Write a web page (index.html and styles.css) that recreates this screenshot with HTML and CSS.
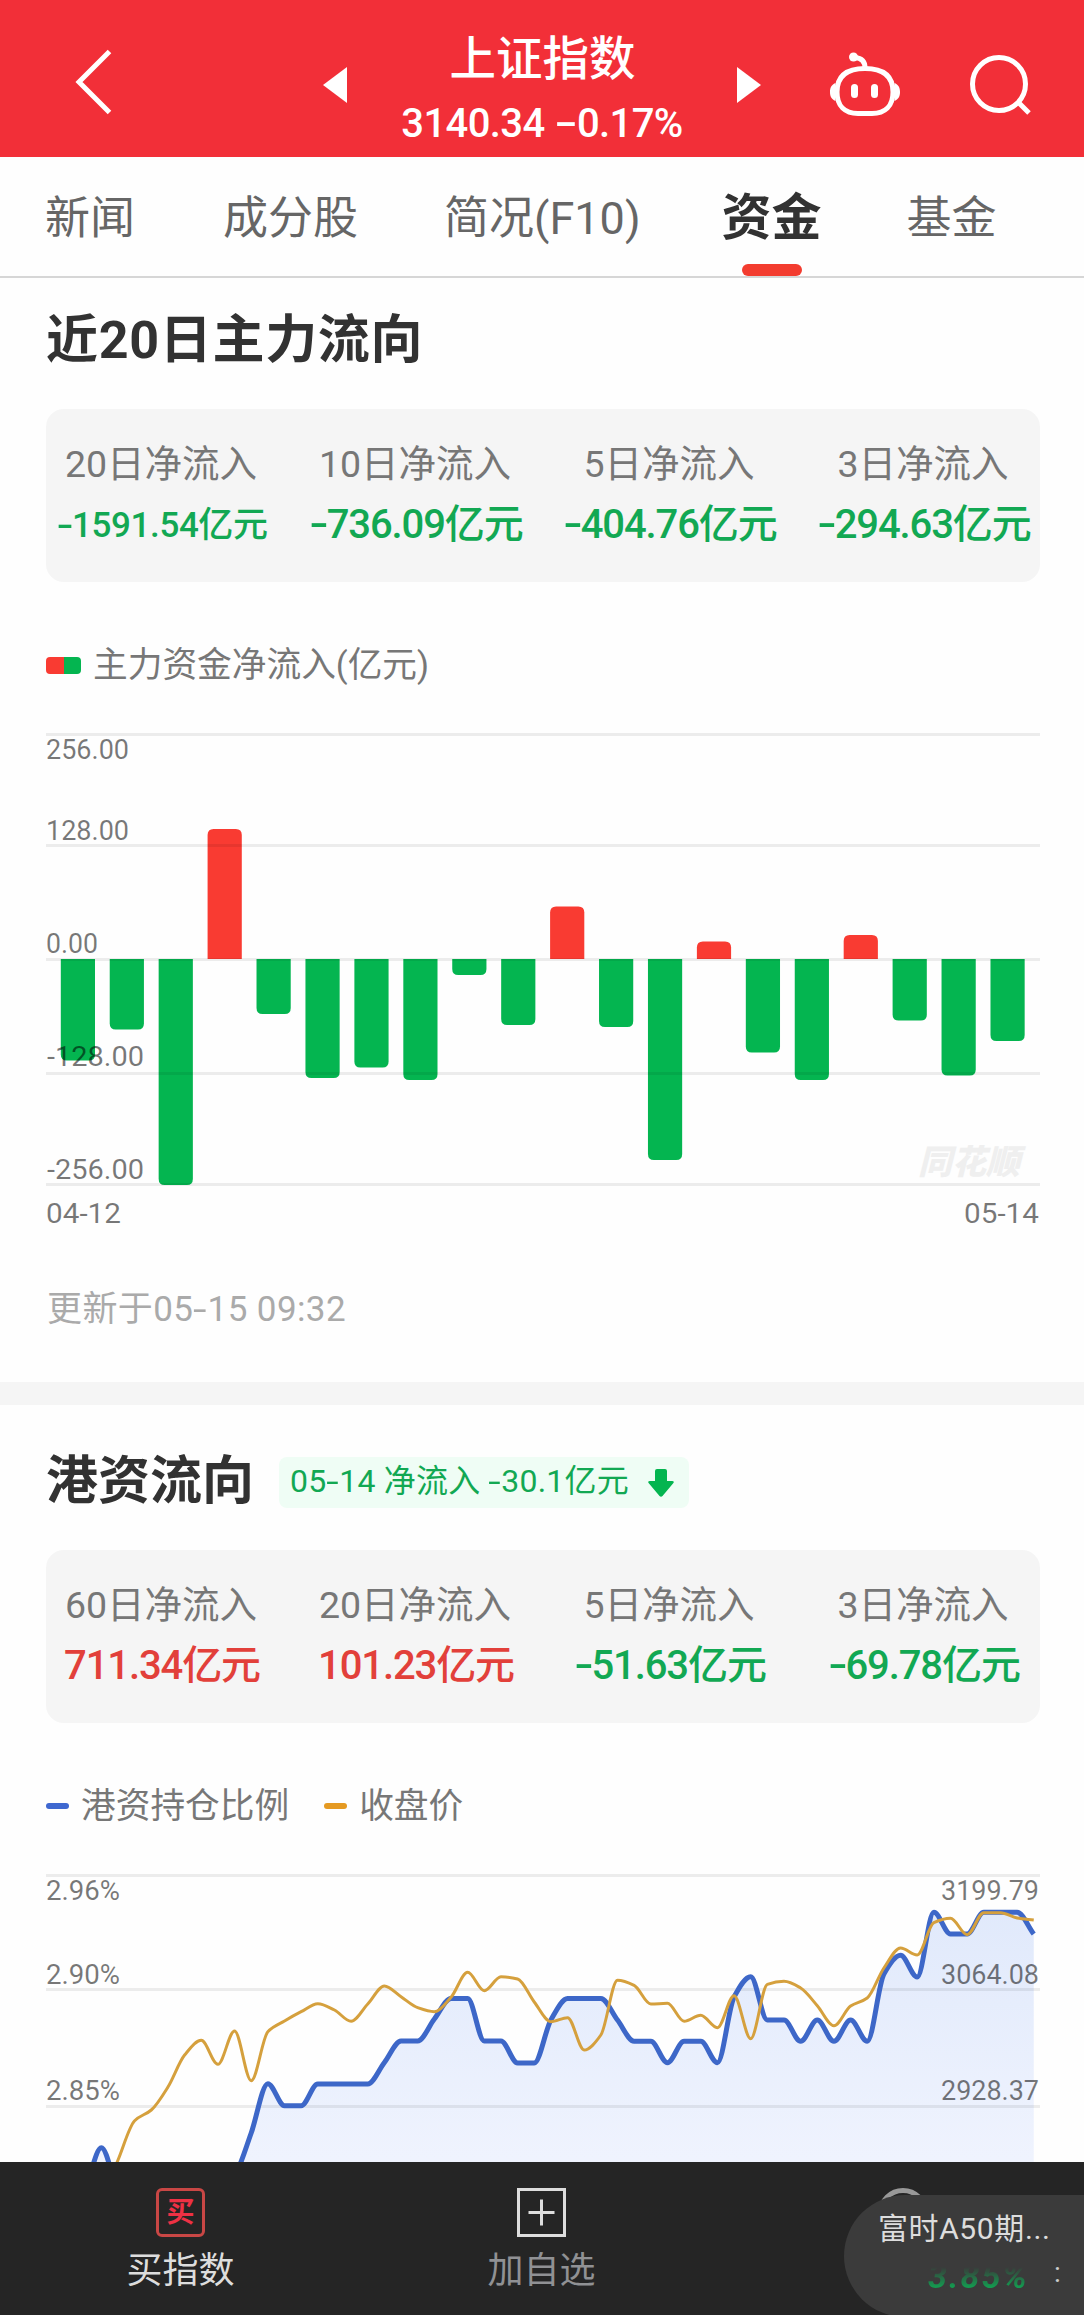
FILE: index.html
```html
<!DOCTYPE html>
<html lang="zh-CN">
<head>
  <meta charset="UTF-8">
  <meta name="viewport" content="width=device-width, initial-scale=1.0">
  <title>上证指数 - 资金</title>
  <link rel="stylesheet" href="styles.css">
</head>
<body>
  <div class="page">
    <header class="topbar">
      <svg class="back" width="40" height="68" viewBox="0 0 40 68"><path d="M34.500 3.500 4 34l30.500 30.500" /></svg>
      <svg class="prev" width="24" height="36" viewBox="0 0 24 36"><path d="M24 0v36L0 18z" /></svg>
      <div class="stock">
        <div class="stock-name">上证指数</div>
        <div class="stock-price">3140.34 <span class="minus">-</span>0.17%</div>
      </div>
      <svg class="next" width="24" height="36" viewBox="0 0 24 36"><path d="M0 0v36l24-18z" /></svg>
      <svg class="robot" width="70" height="66" viewBox="0 0 70 66">
        <path d="M35 16.500c18 0 28 7 28 23.500 0 14-8 21.500-21 21.500H28C15 61.500 7 54 7 40c0-16.500 10-23.500 28-23.500z" />
        <path d="M35 16c0-6-3-10-10-10.500" />
        <circle class="solid" cx="23.500" cy="5" r="4.500" />
        <path class="solid" d="M5.500 31C1 33 0 36 0 40s1 7 5.500 9zM64.500 31c4.500 2 5.500 5 5.500 9s-1 7-5.500 9z" />
        <rect class="solid" x="21" y="32" width="7" height="14" rx="3.500" />
        <rect class="solid" x="41" y="32" width="7" height="14" rx="3.500" />
      </svg>
      <svg class="search" width="62" height="62" viewBox="0 0 62 62"><circle cx="29" cy="29" r="26.500" /><path d="M48 47l11 11" /></svg>
    </header>

    <nav class="tabs">
      <a class="tab t1">新闻</a>
      <a class="tab t2">成分股</a>
      <a class="tab t3">简况(F10)</a>
      <a class="tab t4 active">资金</a>
      <a class="tab t5">基金</a>
    </nav>

    <section class="main-flow">
      <h2 class="wide">近20日主力流向</h2>
      <div class="card">
        <div class="item"><span class="name">20日净流入</span><span class="num down small"><span class="minus">-</span>1591.54亿元</span></div>
        <div class="item"><span class="name">10日净流入</span><span class="num down"><span class="minus">-</span>736.09亿元</span></div>
        <div class="item"><span class="name">5日净流入</span><span class="num down"><span class="minus">-</span>404.76亿元</span></div>
        <div class="item"><span class="name">3日净流入</span><span class="num down"><span class="minus">-</span>294.63亿元</span></div>
      </div>
      <div class="legend"><i class="mark-bar"></i><span>主力资金净流入(亿元)</span></div>
      <svg id="barChart" class="chart" width="994" height="505" viewBox="46 729 994 505"></svg>
      <p class="update">更新于05<span class="minus">-</span>15 09:32</p>
    </section>

    <section class="hk-flow">
      <div class="title-row">
        <h2>港资流向</h2>
        <div class="badge">
          <span class="badge-text">05<span class="minus">-</span>14 净流入 <span class="minus">-</span>30.1亿元</span>
          <svg width="26" height="28" viewBox="0 0 26 28"><path d="M7 2q0-2 2-2h8q2 0 2 2v10h5q3 0 1 2.500L14.500 27q-1.500 1.500-3 0L1 14.500Q-1 12 2 12h5z" /></svg>
        </div>
      </div>
      <div class="card">
        <div class="item"><span class="name">60日净流入</span><span class="num up">711.34亿元</span></div>
        <div class="item"><span class="name">20日净流入</span><span class="num up">101.23亿元</span></div>
        <div class="item"><span class="name">5日净流入</span><span class="num down"><span class="minus">-</span>51.63亿元</span></div>
        <div class="item"><span class="name">3日净流入</span><span class="num down"><span class="minus">-</span>69.78亿元</span></div>
      </div>
      <div class="legend">
        <i class="mark-line blue"></i><span class="first">港资持仓比例</span>
        <i class="mark-line orange"></i><span>收盘价</span>
      </div>
      <svg id="lineChart" class="chart" width="994" height="292" viewBox="46 1870 994 292"></svg>
    </section>

    <footer class="bottom">
      <div class="action buy">
        <div class="buy-icon">买</div>
        <span>买指数</span>
      </div>
      <div class="action add">
        <svg width="49" height="49" viewBox="0 0 49 49"><path d="M1.500 1.500h46v46h-46zM24.500 11.500v26M11.500 24.500h26" /></svg>
        <span>加自选</span>
      </div>
      <div class="action more">
        <svg width="50" height="50" viewBox="0 0 50 50"><circle cx="25" cy="25" r="22.500" /></svg>
      </div>
      <div class="float">
        <div class="float-name">富时A50期...</div>
        <div class="float-row"><span class="float-num">3.85%</span><span class="float-more">:</span></div>
      </div>
    </footer>
  </div>
  <script src="script.js"></script>
</body>
</html>
```

FILE: styles.css
```css
* { box-sizing: border-box; margin: 0; padding: 0; }
body { font-family: Roboto, "Noto Sans CJK SC", sans-serif; background: #fefefe; color: #323232; }
svg { display: block; fill: none; }
.page { display: flex; flex-direction: column; width: 1084px; height: 2315px; overflow: hidden; }

/* header */
.topbar { display: flex; height: 157px; flex: none; background: #f22f38; color: #fff; }
.topbar svg { flex: none; stroke: #fff; stroke-width: 5; }
.topbar .solid, .prev path, .next path { fill: #fff; stroke: none; }
.back { margin: 48px 0 0 75px; }
.prev { margin: 67px 0 0 208px; }
.stock { width: 390px; padding-top: 30px; text-align: center; white-space: nowrap; }
.stock-name { font-size: 46.5px; font-weight: 500; line-height: 58px; padding-left: 1px; }
.stock-price { font-size: 40px; font-weight: 500; line-height: 40px; margin-top: 16px; letter-spacing: -0.6px; }
.minus { display: inline-block; transform: scaleX(1.4); margin: 0 0.06em; }
.stock-price .minus { transform: scaleX(1.7); margin: 0 5px; }
.next { margin: 67px 0 0 0; }
.robot { margin: 52px 0 0 69px; stroke-width: 5; }
.search { margin: 55px 0 0 70px; }

/* tabs */
.tabs { display: flex; height: 121px; flex: none; border-bottom: 2px solid #d6d6d6; padding-left: 45px; }
.tab { font-size: 45px; line-height: 123px; color: #666; height: 119px; white-space: nowrap; }
.t2 { margin-left: 88px; }
.t3 { margin-left: 86px; }
.t4 { margin-left: 81px; }
.t5 { margin-left: 85px; }
.tab.active { position: relative; font-size: 50px; font-weight: bold; color: #323232; }
.tab.active::after { content: ""; position: absolute; left: 20px; bottom: 0; width: 60px; height: 12px; border-radius: 6px; background: #f33c2f; }

/* sections */
section { padding: 0 44px 0 46px; flex: none; }
h2 { font-size: 52px; font-weight: bold; line-height: 60px; white-space: nowrap; }
.wide { letter-spacing: 0.7px; }
.main-flow { height: 1104px; padding-top: 33px; }
.card { height: 173px; margin-top: 38px; padding: 25px 0 0; border-radius: 18px; background: #f5f5f5; display: flex; justify-content: center; }
.item { width: 254px; flex: none; display: flex; flex-direction: column; align-items: center; white-space: nowrap; }
.name { font-size: 37.5px; line-height: 60px; color: #777; margin-left: -2px; }
.num { font-size: 40px; line-height: 61px; font-weight: 500; letter-spacing: -1.1px; }
.num.small { font-size: 35px; line-height: 63px; letter-spacing: -0.4px; }
.up { color: #e2403a; }
.down { color: #12a853; }
.legend { display: flex; align-items: center; height: 40px; margin-top: 63px; font-size: 34.7px; line-height: 40px; color: #777; }
.mark-bar { width: 35px; height: 17px; margin-right: 12px; border-radius: 4px; background: linear-gradient(90deg, #f93b32 50%, #04b550 50%); }
.chart { margin-top: 44px; }
.update { margin-top: 56px; font-size: 35px; line-height: 40px; letter-spacing: 0.4px; color: #aaa; padding-left: 1px; }

.hk-flow { height: 780px; border-top: 23px solid #f5f5f5; padding-top: 47px; }
.title-row { display: flex; align-items: center; height: 60px; }
.badge { display: flex; align-items: center; width: 410px; height: 51px; margin: 1px 0 0 25px; padding-left: 11px; border-radius: 8px; background: #effdf5; color: #12a853; font-size: 32px; letter-spacing: 0.2px; line-height: 47px; white-space: nowrap; }
.badge-text { width: 358px; padding-bottom: 3px; }
.badge svg { fill: #04b550; }
.mark-line { width: 23px; height: 6px; border-radius: 3px; margin-right: 12px; }
.blue { background: #3f68d0; }
.orange { background: #e59a22; }
.first { margin-right: 35px; }

/* charts */
.grid { stroke: #000; stroke-opacity: .07; stroke-width: 3; }
.axis { fill: #000; fill-opacity: .53; font-size: 28px; }
.rise { fill: #f93b32; }
.fall { fill: #04b550; }
.watermark { fill: #efefef; font-size: 34px; font-weight: 900; font-style: italic; }
.ratio { stroke: #3d67c8; stroke-width: 5; stroke-linejoin: round; }
.price { stroke: #d5a03d; stroke-width: 3; stroke-linejoin: round; }

/* bottom bar */
.bottom { position: relative; flex: none; display: flex; height: 153px; background: #252525; color: #ddd; }
.action { width: 361px; padding-top: 26px; display: flex; flex-direction: column; align-items: center; font-size: 36px; line-height: 44px; }
.action span { margin-top: 12px; }
.action svg { stroke: #ddd; stroke-width: 3; }
.buy-icon { width: 49px; height: 49px; border: 3px solid #c94745; border-radius: 6px; color: #ee3144; font-size: 28px; font-weight: bold; line-height: 43px; text-align: center; }
.add { color: #909194; }
.more svg { stroke: #999; stroke-width: 5; }
.float { position: absolute; left: 844px; top: 33px; width: 260px; height: 122px; padding: 14px 0 0 34px; border-radius: 61px 0 0 61px; background: #3b3b3b; }
.float-name { font-size: 30px; line-height: 40px; letter-spacing: 0.6px; color: #ddd; white-space: nowrap; }
.float-row { display: flex; height: 40px; margin-top: 4px; padding-left: 50px; font-size: 34px; line-height: 46px; }
.float-num { width: 126px; color: #149a50; font-weight: bold; font-style: italic; letter-spacing: 2px; -webkit-mask-image: linear-gradient(transparent 35%, #000 85%); mask-image: linear-gradient(transparent 35%, #000 85%); }
.float-more { color: #ccc; font-size: 28px; line-height: 40px; }
```

FILE: script.js
```js
const NS = 'http://www.w3.org/2000/svg';

function add(svg, tag, attrs, text) {
  const el = document.createElementNS(NS, tag);
  for (const key in attrs) el.setAttribute(key, attrs[key]);
  if (text) el.textContent = text;
  svg.appendChild(el);
  return el;
}

function gridLine(svg, y) {
  add(svg, 'line', { x1: 46, x2: 1040, y1: y, y2: y, class: 'grid' });
}

// y is the vertical centre of the digits
function label(svg, x, y, width, text) {
  add(svg, 'text', { x: x, y: y + 10, textLength: width, lengthAdjust: 'spacingAndGlyphs', class: 'axis' }, text);
}

// main capital flow, bar heights in px (positive = inflow)
const flows = [-101.5, -70.5, -226, 130, -55, -119, -108.5, -121, -16, -66, 52.5, -68, -201, 17.5, -93.5, -121, 24, -61.5, -116.5, -82];
const barSvg = document.getElementById('barChart');
flows.forEach((h, i) => {
  const x = 60.8 + i * 48.93;
  const w = 34.2;
  const d = h > 0 ? -1 : 1;
  const end = 959 - h;
  add(barSvg, 'path', {
    class: h > 0 ? 'rise' : 'fall',
    d: `M${x} 959V${end - 6 * d}q0 ${6 * d} 6 ${6 * d}h${w - 12}q6 0 6 ${-6 * d}V959z`
  });
});
[734.5, 845.5, 959.5, 1073.5, 1184.5].forEach(y => gridLine(barSvg, y));
label(barSvg, 46, 749, 83, '256.00');
label(barSvg, 46, 830, 83, '128.00');
label(barSvg, 46, 943, 52, '0.00');
label(barSvg, 47, 1056, 97, '-128.00');
label(barSvg, 47, 1169, 97, '-256.00');
label(barSvg, 46, 1213, 75, '04-12');
label(barSvg, 964, 1213, 75, '05-14');
add(barSvg, 'text', { x: 918, y: 1174, class: 'watermark' }, '同花顺');

// smooth line that never overshoots its points
function curve(ys, x0, step) {
  const n = ys.length;
  const slope = [];
  for (let i = 0; i < n - 1; i++) slope.push(ys[i + 1] - ys[i]);
  const t = ys.map((y, i) => {
    if (i === 0) return slope[0];
    if (i === n - 1) return slope[n - 2];
    const a = slope[i - 1], b = slope[i];
    return a * b <= 0 ? 0 : 2 * a * b / (a + b);
  });
  let d = `M${x0} ${ys[0]}`;
  for (let i = 1; i < n; i++) {
    const x = x0 + i * step;
    d += `C${x - step * 2 / 3} ${ys[i - 1] + t[i - 1] / 3} ${x - step / 3} ${ys[i] - t[i] / 3} ${x} ${ys[i]}`;
  }
  return d;
}

const ratio = [2220, 2215, 2190, 2147.7, 2191, 2215, 2220, 2220, 2220, 2215, 2200, 2177, 2133, 2083.7, 2105.7, 2105.7,
  2084, 2084, 2084, 2084, 2062.5, 2041, 2041, 2019, 1998.5, 1998.5, 2041, 2041, 2063, 2063,
  2020, 1998.5, 1998.5, 1998.5, 2020, 2041.3, 2041.3, 2062.7, 2041.3, 2041.3, 2062.7, 1997, 1976.7, 2020, 2020,
  2041.3, 2020, 2041.3, 2020, 2041.3, 1974, 1955.3, 1977, 1912.3, 1934, 1934, 1912.3, 1912.3, 1912.3, 1934];
const price = [2230, 2220, 2210, 2200, 2160, 2120.7, 2110, 2087, 2055, 2040.3, 2064.3, 2031, 2080.7, 2031.7, 2021,
  2011.7, 2003.7, 2010, 2021.3, 2004, 1986, 1996.7, 2007.7, 2011.7, 1997.3, 1972.3, 1990.7, 1976.7, 1979, 2002,
  2021.7, 2017.7, 2050, 2035, 1980.3, 1985.3, 2004, 2003.3, 2021.3, 2015.3, 2027.7, 1995.7, 2038.7, 1984.3, 1981.3,
  1988, 2005.7, 2025.7, 2006, 1998, 1968, 1948, 1955, 1922.7, 1918.3, 1934.7, 1912.7, 1912.7, 1918, 1920];

const lineSvg = document.getElementById('lineChart');
const defs = add(lineSvg, 'defs', {});
const fill = add(defs, 'linearGradient', { id: 'area', gradientUnits: 'userSpaceOnUse', x1: 0, x2: 0, y1: 1900, y2: 2260 });
add(fill, 'stop', { offset: 0, 'stop-color': '#e0e9fb' });
add(fill, 'stop', { offset: 1, 'stop-color': '#f5f7ff' });
const ratioPath = curve(ratio, 51.4, 16.65);
add(lineSvg, 'path', { d: ratioPath + 'V2300H51.4z', fill: 'url(#area)' });
[1875.5, 1989.5, 2106.5].forEach(y => gridLine(lineSvg, y));
add(lineSvg, 'path', { d: ratioPath, class: 'ratio' });
add(lineSvg, 'path', { d: curve(price, 51.4, 16.65), class: 'price' });
label(lineSvg, 46, 1890, 74, '2.96%');
label(lineSvg, 46, 1974, 74, '2.90%');
label(lineSvg, 46, 2090, 74, '2.85%');
label(lineSvg, 941, 1890, 98, '3199.79');
label(lineSvg, 941, 1974, 98, '3064.08');
label(lineSvg, 941, 2090, 98, '2928.37');
```
